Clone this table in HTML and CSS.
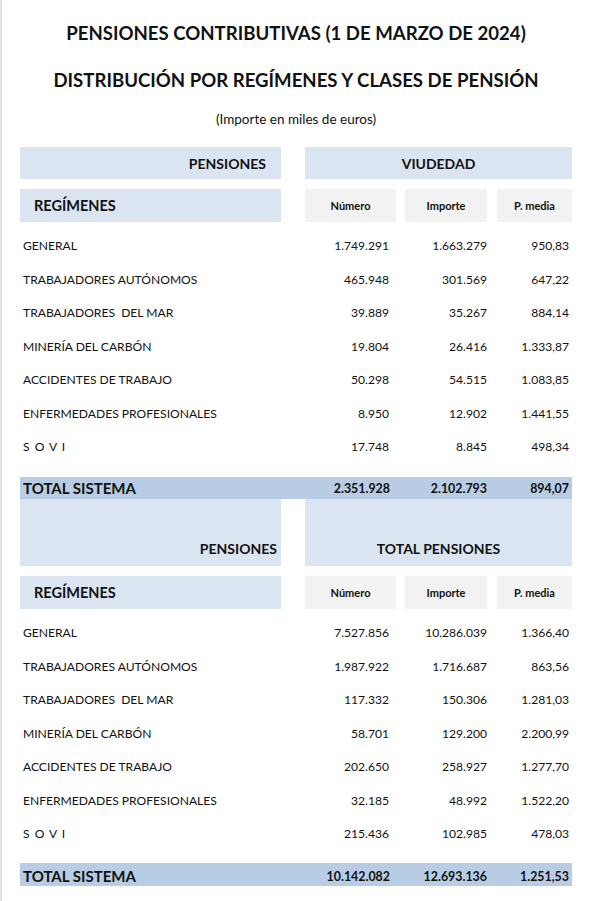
FILE: index.html
```html
<!DOCTYPE html>
<html lang="es">
<head>
<meta charset="utf-8">
<link rel="stylesheet" href="styles.css">
</head>
<body>
<div class="page">
  <h1 class="title t1">PENSIONES CONTRIBUTIVAS (1 DE MARZO DE 2024)</h1>
  <h2 class="title t2">DISTRIBUCIÓN POR REGÍMENES Y CLASES DE PENSIÓN</h2>
  <p class="subtitle">(Importe en miles de euros)</p>

  <section class="block">
    <div class="head-row">
      <div class="box blue left-head">PENSIONES</div>
      <div class="box blue right-head">VIUDEDAD</div>
    </div>
    <div class="grid sub-row">
      <div class="box blue reg">REGÍMENES</div>
      <div class="box gray c1">Número</div>
      <div class="box gray c2">Importe</div>
      <div class="box gray c3">P. media</div>
    </div>
    <div class="rows">
      <div class="grid row"><span class="lbl">GENERAL</span><span class="n c1">1.749.291</span><span class="n c2">1.663.279</span><span class="n c3">950,83</span></div>
      <div class="grid row"><span class="lbl">TRABAJADORES AUTÓNOMOS</span><span class="n c1">465.948</span><span class="n c2">301.569</span><span class="n c3">647,22</span></div>
      <div class="grid row"><span class="lbl">TRABAJADORES&nbsp; DEL MAR</span><span class="n c1">39.889</span><span class="n c2">35.267</span><span class="n c3">884,14</span></div>
      <div class="grid row"><span class="lbl">MINERÍA DEL CARBÓN</span><span class="n c1">19.804</span><span class="n c2">26.416</span><span class="n c3">1.333,87</span></div>
      <div class="grid row"><span class="lbl">ACCIDENTES DE TRABAJO</span><span class="n c1">50.298</span><span class="n c2">54.515</span><span class="n c3">1.083,85</span></div>
      <div class="grid row"><span class="lbl">ENFERMEDADES PROFESIONALES</span><span class="n c1">8.950</span><span class="n c2">12.902</span><span class="n c3">1.441,55</span></div>
      <div class="grid row"><span class="lbl sovi">S O V I</span><span class="n c1">17.748</span><span class="n c2">8.845</span><span class="n c3">498,34</span></div>
    </div>
    <div class="grid total total1"><span class="tlbl">TOTAL SISTEMA</span><span class="n c1">2.351.928</span><span class="n c2">2.102.793</span><span class="n c3">894,07</span></div>
  </section>

  <section class="block">
    <div class="head-row tall">
      <div class="box blue left-head">PENSIONES</div>
      <div class="box blue right-head">TOTAL PENSIONES</div>
    </div>
    <div class="grid sub-row">
      <div class="box blue reg">REGÍMENES</div>
      <div class="box gray c1">Número</div>
      <div class="box gray c2">Importe</div>
      <div class="box gray c3">P. media</div>
    </div>
    <div class="rows">
      <div class="grid row"><span class="lbl">GENERAL</span><span class="n c1">7.527.856</span><span class="n c2">10.286.039</span><span class="n c3">1.366,40</span></div>
      <div class="grid row"><span class="lbl">TRABAJADORES AUTÓNOMOS</span><span class="n c1">1.987.922</span><span class="n c2">1.716.687</span><span class="n c3">863,56</span></div>
      <div class="grid row"><span class="lbl">TRABAJADORES&nbsp; DEL MAR</span><span class="n c1">117.332</span><span class="n c2">150.306</span><span class="n c3">1.281,03</span></div>
      <div class="grid row"><span class="lbl">MINERÍA DEL CARBÓN</span><span class="n c1">58.701</span><span class="n c2">129.200</span><span class="n c3">2.200,99</span></div>
      <div class="grid row"><span class="lbl">ACCIDENTES DE TRABAJO</span><span class="n c1">202.650</span><span class="n c2">258.927</span><span class="n c3">1.277,70</span></div>
      <div class="grid row"><span class="lbl">ENFERMEDADES PROFESIONALES</span><span class="n c1">32.185</span><span class="n c2">48.992</span><span class="n c3">1.522,20</span></div>
      <div class="grid row"><span class="lbl sovi">S O V I</span><span class="n c1">215.436</span><span class="n c2">102.985</span><span class="n c3">478,03</span></div>
    </div>
    <div class="grid total total2"><span class="tlbl">TOTAL SISTEMA</span><span class="n c1">10.142.082</span><span class="n c2">12.693.136</span><span class="n c3">1.251,53</span></div>
  </section>
</div>
</body>
</html>
```

FILE: styles.css
```css
* { box-sizing: border-box; }
html, body { margin: 0; padding: 0; background: #fff; }
body {
  font-family: Lato, "Liberation Sans", sans-serif;
  color: #111;
  width: 593px;
  height: 901px;
  overflow: hidden;
}
.page {
  border-left: 2px solid #e2e2e2;
  height: 901px;
  padding: 0 21px 0 18px;
}
.title {
  margin: 0;
  text-align: center;
  font-weight: 700;
  font-size: 18.6px;
  line-height: 20px;
}
.t1 { padding-top: 23px; }
.t2 { padding-top: 27px; }
.subtitle {
  margin: 0;
  padding-top: 21px;
  text-align: center;
  font-size: 13.5px;
  line-height: 16px;
}
.subtitle + .block { margin-top: 20px; }
.box {
  display: flex;
  align-items: center;
  font-weight: 700;
}
.blue { background: #dbe5f1; }
.gray { background: #f2f2f2; justify-content: center; font-size: 11px; }
.head-row {
  display: grid;
  grid-template-columns: 261px 267px;
  column-gap: 24px;
  height: 32px;
  font-size: 14px;
}
.head-row .left-head { justify-content: flex-end; padding-right: 15px; }
.head-row .right-head { justify-content: center; }
.head-row.tall { height: 67px; }
.head-row.tall .box { align-items: flex-end; padding-bottom: 9px; }
.head-row.tall .left-head { padding-right: 4px; }
.grid {
  display: grid;
  grid-template-columns: 261px 24px 91px 9px 82px 10px 75px;
}
.c1 { grid-column: 3; }
.c2 { grid-column: 5; }
.c3 { grid-column: 7; }
.sub-row { height: 33px; margin-top: 10px; }
.sub-row .reg { grid-column: 1; padding-left: 14px; font-size: 14.5px; }
.rows { padding-top: 7px; }
.row { height: 33.5px; align-items: center; font-size: 12.1px; }
.lbl { grid-column: 1; padding-left: 3px; }
.sovi { letter-spacing: 1px; }
.n { text-align: right; }
.row .c1 { padding-right: 7px; }
.row .c2 { padding-right: 0; }
.row .c3 { padding-right: 3px; }
.total {
  background: #b8cce4;
  height: 22px;
  align-items: center;
  font-weight: 700;
  font-size: 12.4px;
}
.total1 { margin-top: 13.5px; }
.total2 { margin-top: 12.5px; height: 23px; padding-top: 3px; }
.tlbl { grid-column: 1; font-size: 15px; padding-left: 3px; }
.total .c1 { padding-right: 6px; }
.total .c2 { padding-right: 0; }
.total .c3 { padding-right: 3px; }
```
